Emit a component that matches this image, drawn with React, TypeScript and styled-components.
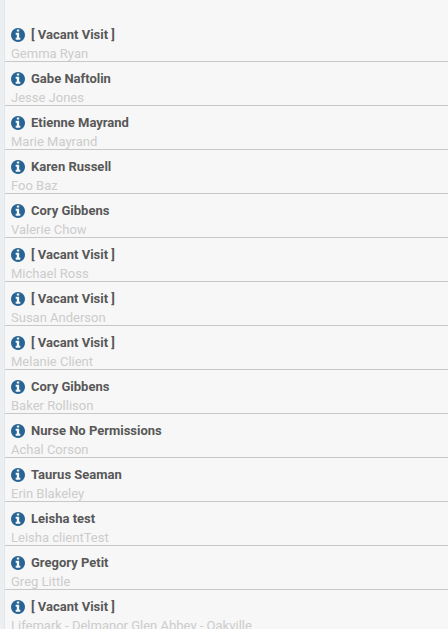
import React from "react";
import styled, { createGlobalStyle } from "styled-components";

const GlobalStyle = createGlobalStyle`
  * { box-sizing: border-box; }
  html { height: 100%; }
  body {
    margin: 0;
    height: 100%;
    overflow: hidden;
    background: #f7f7f7;
    font-family: Roboto, "Liberation Sans", sans-serif;
    font-size: 13px;
  }
  #root { height: 100%; }
`;

const Panel = styled.main`
  min-height: 100%;
  border-left: 4px solid #ebeff2;
`;

const VisitList = styled.ul`
  margin: 0;
  padding: 18px 0 0;
  list-style: none;
  border-left: 1px solid #e2e6e9;
`;

const VisitRow = styled.li`
  height: 44px;
  padding: 7px 6px 0;
  border-bottom: 1px solid #c8c8c8;
`;

const Heading = styled.div`
  display: flex;
  align-items: center;
  gap: 6px;
  height: 19px;
`;

const InfoButton = styled.button`
  display: flex;
  padding: 0;
  border: 0;
  background: none;
  color: #286594;
  cursor: pointer;
`;

const Caregiver = styled.span`
  color: #585858;
  font-weight: 700;
  line-height: 19px;
  white-space: nowrap;
`;

const Client = styled.div`
  color: #ccc;
  line-height: 19px;
  white-space: nowrap;
`;

const InfoIcon = () => (
  <svg width="14" height="14" viewBox="128 128 1536 1536" fill="currentColor" aria-hidden="true">
    <path d="M1152 1376v-160q0-14-9-23t-23-9h-96v-512q0-14-9-23t-23-9h-320q-14 0-23 9t-9 23v160q0 14 9 23t23 9h96v320h-96q-14 0-23 9t-9 23v160q0 14 9 23t23 9h448q14 0 23-9t9-23zM1024 480v-160q0-14-9-23t-23-9h-192q-14 0-23 9t-9 23v160q0 14 9 23t23 9h192q14 0 23-9t9-23zM1664 896q0 209-103 385.500t-279.500 279.500-385.500 103-385.500-103-279.500-279.500-103-385.500 103-385.500 279.500-279.500 385.500-103 385.500 103 279.500 279.500 103 385.500z" />
  </svg>
);

const visits = [
  { caregiver: "[ Vacant Visit ]", client: "Gemma Ryan" },
  { caregiver: "Gabe Naftolin", client: "Jesse Jones" },
  { caregiver: "Etienne Mayrand", client: "Marie Mayrand" },
  { caregiver: "Karen Russell", client: "Foo Baz" },
  { caregiver: "Cory Gibbens", client: "Valerie Chow" },
  { caregiver: "[ Vacant Visit ]", client: "Michael Ross" },
  { caregiver: "[ Vacant Visit ]", client: "Susan Anderson" },
  { caregiver: "[ Vacant Visit ]", client: "Melanie Client" },
  { caregiver: "Cory Gibbens", client: "Baker Rollison" },
  { caregiver: "Nurse No Permissions", client: "Achal Corson" },
  { caregiver: "Taurus Seaman", client: "Erin Blakeley" },
  { caregiver: "Leisha test", client: "Leisha clientTest" },
  { caregiver: "Gregory Petit", client: "Greg Little" },
  { caregiver: "[ Vacant Visit ]", client: "Lifemark - Delmanor Glen Abbey - Oakville" },
];

export default function App() {
  return (
    <>
      <GlobalStyle />
      <Panel>
        <VisitList>
          {visits.map((visit) => (
            <VisitRow key={visit.client}>
              <Heading>
                <InfoButton type="button" aria-label={`Visit details for ${visit.client}`}>
                  <InfoIcon />
                </InfoButton>
                <Caregiver>{visit.caregiver}</Caregiver>
              </Heading>
              <Client>{visit.client}</Client>
            </VisitRow>
          ))}
        </VisitList>
      </Panel>
    </>
  );
}
